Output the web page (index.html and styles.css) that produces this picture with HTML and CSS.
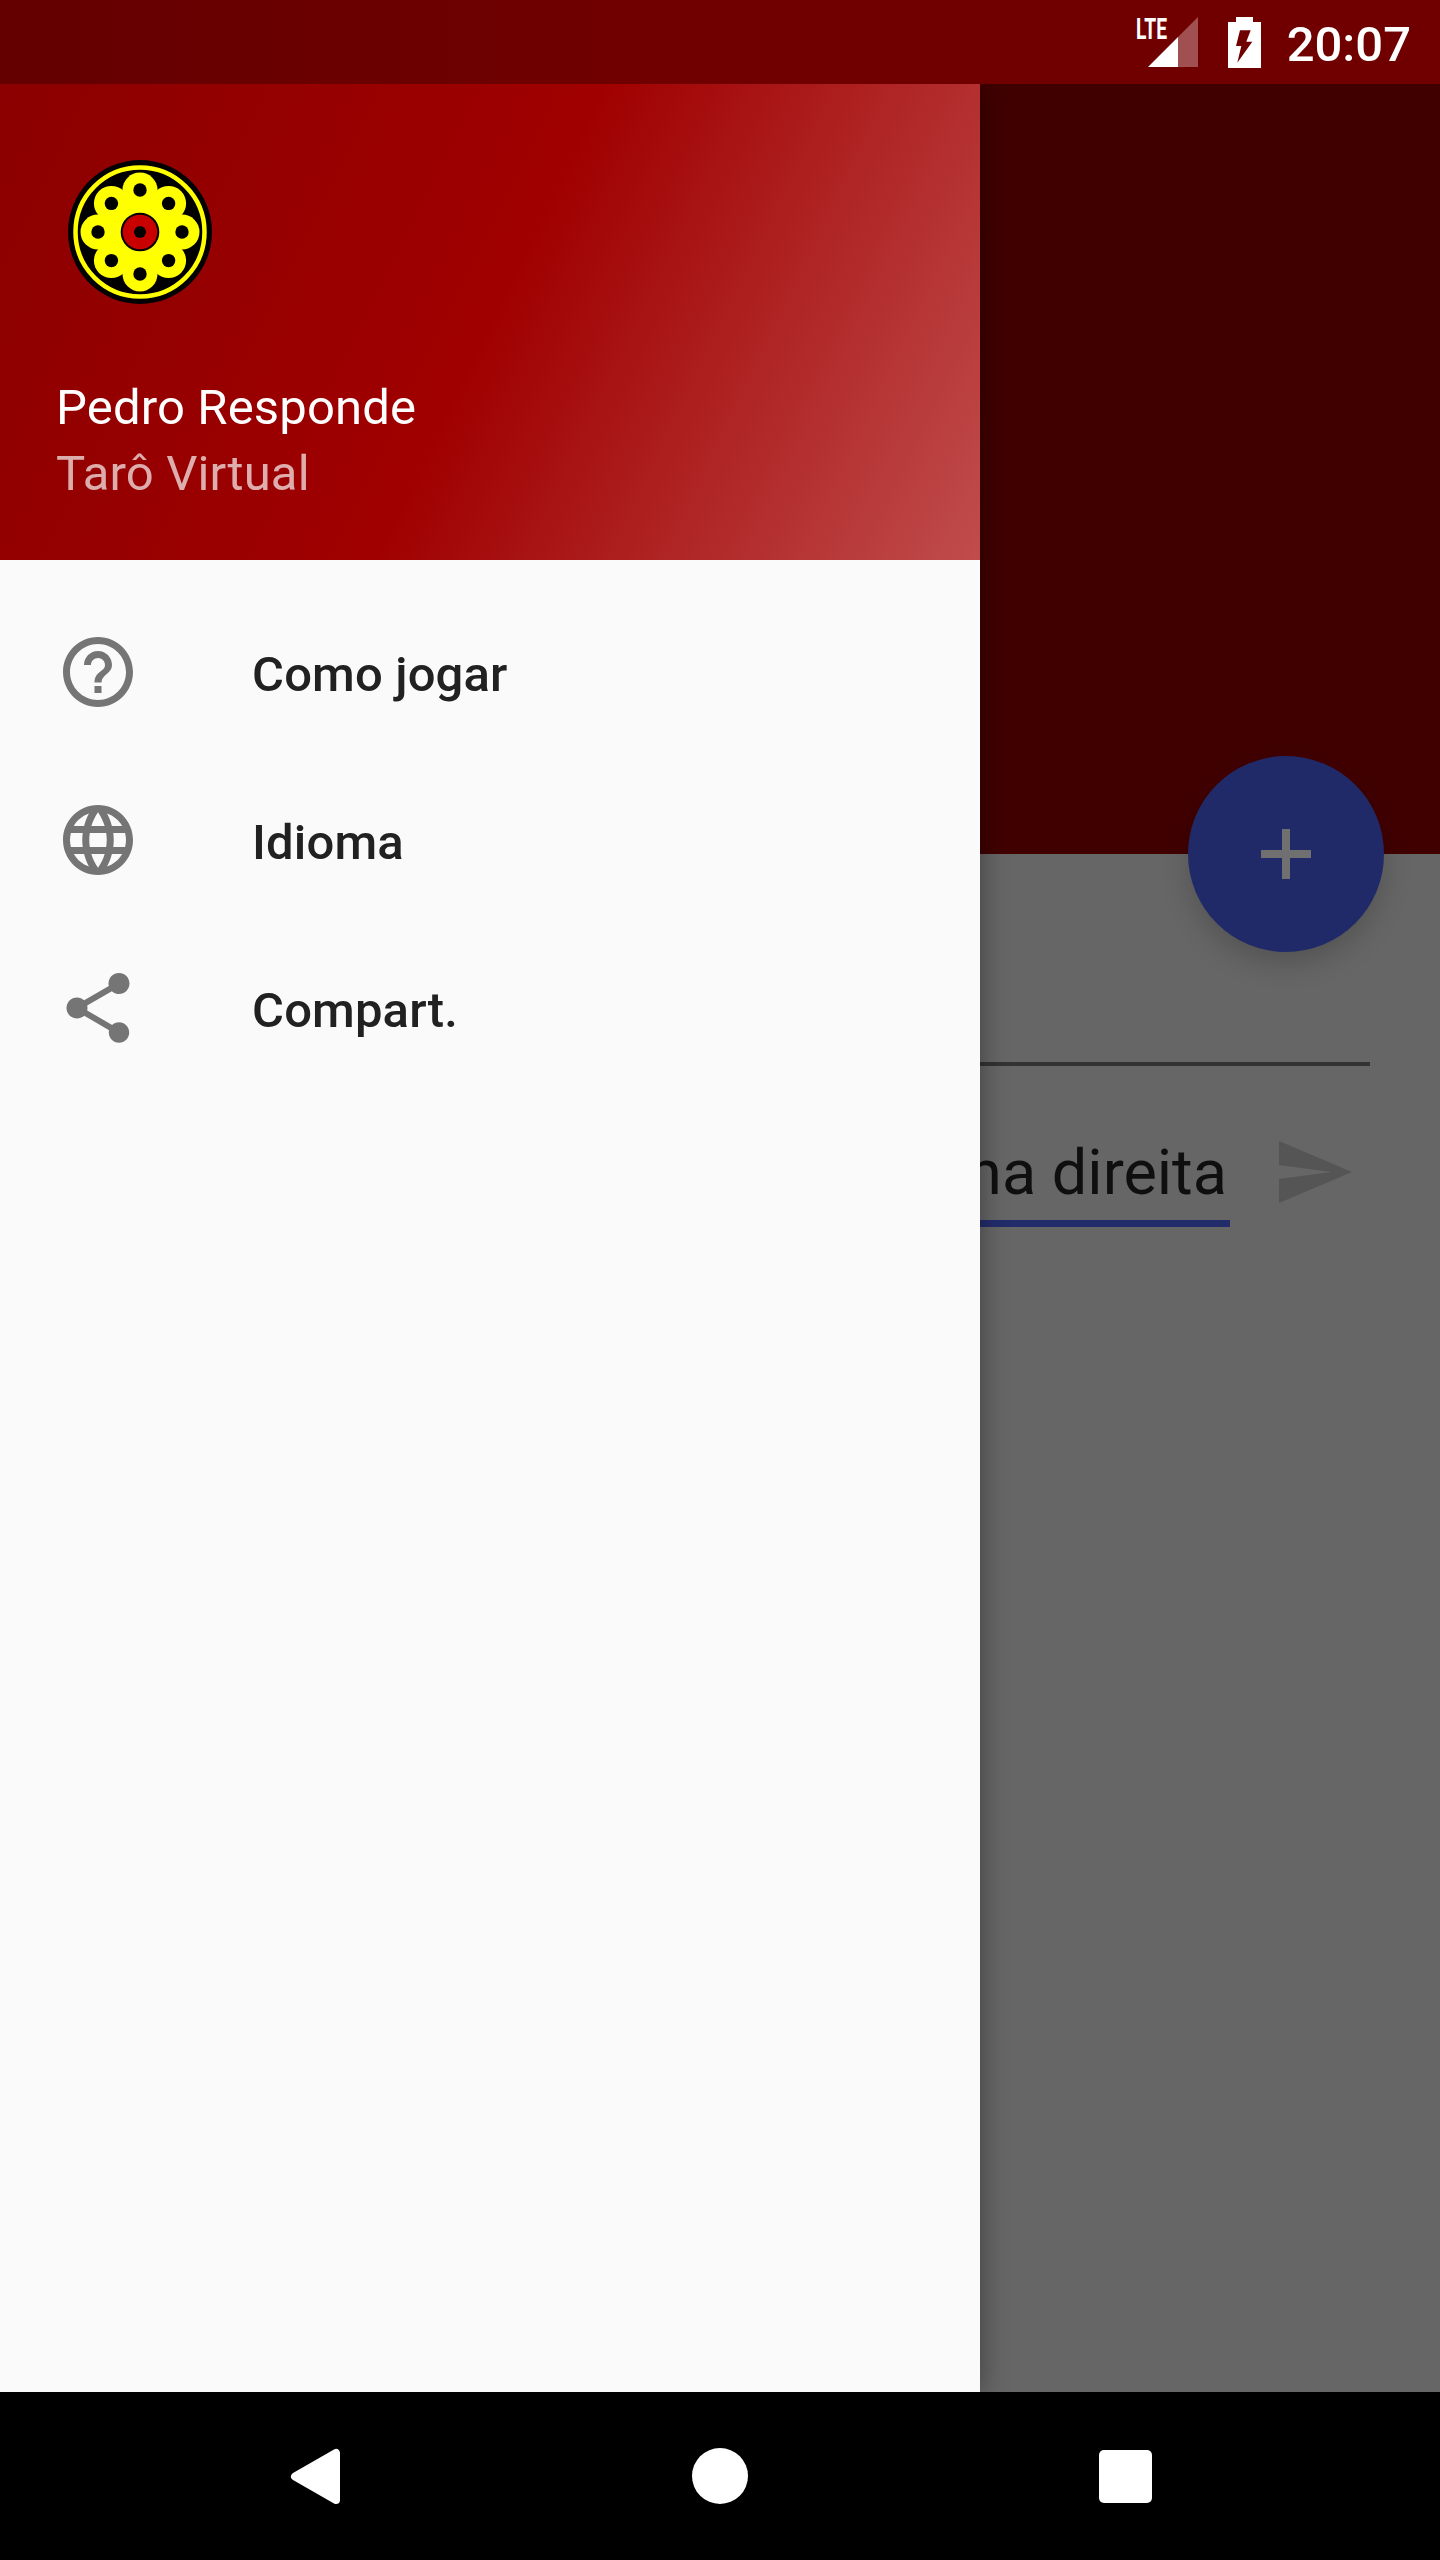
FILE: index.html
```html
<!DOCTYPE html>
<html lang="pt">
<head>
<meta charset="utf-8">
<title>Pedro Responde</title>
<link rel="stylesheet" href="styles.css">
</head>
<body>
<div class="phone">
  <header class="status">
    <svg class="sig" width="62" height="60" viewBox="0 -10 62 60">
      <text class="lte" x="0" y="22" textLength="31" lengthAdjust="spacingAndGlyphs">LTE</text>
      <polygon class="sig-dim" points="42,50 62,50 62,0 42,20"/>
      <polygon class="sig-on" points="12,50 42,50 42,20"/>
    </svg>
    <svg class="bat" width="33" height="51" viewBox="0 0 33 51">
      <path class="ico-white" fill-rule="evenodd" d="M8 0h17v5h8v46H0V5h8zM12 13.300H22.700L18.300 24.700H24.300L9.300 45.700L13.300 29H8z"/>
    </svg>
    <span class="time">20:07</span>
  </header>

  <main class="screen">
    <div class="appbar"></div>
    <div class="content">
      <div class="rule"></div>
      <div class="input-row">
        <div class="field"><span class="field-text">na direita</span></div>
        <svg class="send" width="73" height="62" viewBox="0 0 73 62">
          <polygon class="send-shape" points="0,0 73,31 0,62 0,38 53,31 0,24"/>
        </svg>
      </div>
    </div>

    <button class="fab" type="button">
      <svg width="50" height="50" viewBox="0 0 50 50"><path class="fab-plus" d="M21 0h8v21h21v8H29v21h-8V29H0v-8h21z"/></svg>
    </button>

    <aside class="drawer">
      <div class="drawer-head">
        <svg class="logo" width="144" height="144" viewBox="0 0 144 144">
          <circle class="k" cx="72" cy="72" r="72"/>
          <circle class="ring" cx="72" cy="72" r="64.500"/>
          <g class="y">
            <circle cx="72" cy="72" r="44"/>
            <circle cx="72" cy="30" r="17.500"/><circle cx="72" cy="114" r="17.500"/>
            <circle cx="30" cy="72" r="17.500"/><circle cx="114" cy="72" r="17.500"/>
            <circle cx="43.400" cy="43.400" r="17.500"/><circle cx="100.600" cy="43.400" r="17.500"/>
            <circle cx="43.400" cy="100.600" r="17.500"/><circle cx="100.600" cy="100.600" r="17.500"/>
          </g>
          <g class="k">
            <circle cx="72" cy="30" r="6.700"/><circle cx="72" cy="114" r="6.700"/>
            <circle cx="30" cy="72" r="6.700"/><circle cx="114" cy="72" r="6.700"/>
            <circle cx="43.400" cy="43.400" r="6.700"/><circle cx="100.600" cy="43.400" r="6.700"/>
            <circle cx="43.400" cy="100.600" r="6.700"/><circle cx="100.600" cy="100.600" r="6.700"/>
          </g>
          <circle class="hub" cx="72" cy="72" r="18.300"/>
          <circle class="k" cx="72" cy="72" r="6"/>
        </svg>
        <div class="head-name">Pedro Responde</div>
        <div class="head-sub">Tarô Virtual</div>
      </div>
      <nav class="menu">
        <a class="item">
          <svg class="item-ico" width="84" height="84" viewBox="0 0 24 24"><path d="M11 18h2v-2h-2v2zm1-16C6.480 2 2 6.480 2 12s4.480 10 10 10 10-4.480 10-10S17.520 2 12 2zm0 18c-4.410 0-8-3.590-8-8s3.590-8 8-8 8 3.590 8 8-3.590 8-8 8zm0-14c-2.210 0-4 1.790-4 4h2c0-1.100.9-2 2-2s2 .9 2 2c0 2-3 1.750-3 5h2c0-2.250 3-2.500 3-5 0-2.210-1.790-4-4-4z"/></svg>
          <span class="item-label">Como jogar</span>
        </a>
        <a class="item">
          <svg class="item-ico" width="84" height="84" viewBox="0 0 24 24"><path d="M11.990 2C6.470 2 2 6.480 2 12s4.470 10 9.990 10C17.520 22 22 17.520 22 12S17.520 2 11.990 2zm6.930 6h-2.950c-.32-1.250-.78-2.450-1.380-3.560 1.840.63 3.370 1.910 4.330 3.560zM12 4.040c.83 1.200 1.480 2.530 1.910 3.960h-3.820c.43-1.430 1.080-2.760 1.910-3.960zM4.260 14C4.100 13.360 4 12.690 4 12s.1-1.360.26-2h3.380c-.08.66-.14 1.320-.14 2 0 .68.06 1.340.14 2H4.260zm.82 2h2.950c.32 1.250.78 2.450 1.380 3.560-1.840-.63-3.370-1.900-4.330-3.560zm2.950-8H5.080c.96-1.660 2.490-2.930 4.330-3.560C8.810 5.550 8.350 6.750 8.030 8zM12 19.960c-.83-1.200-1.480-2.530-1.910-3.960h3.820c-.43 1.430-1.080 2.760-1.910 3.960zM14.340 14H9.660c-.09-.66-.16-1.320-.16-2 0-.68.07-1.350.16-2h4.680c.09.65.16 1.320.16 2 0 .68-.07 1.340-.16 2zm.25 5.560c.6-1.110 1.060-2.310 1.380-3.560h2.950c-.96 1.650-2.490 2.930-4.330 3.560zM16.360 14c.08-.66.14-1.320.14-2 0-.68-.06-1.340-.14-2h3.380c.16.64.26 1.310.26 2s-.1 1.360-.26 2h-3.380z"/></svg>
          <span class="item-label">Idioma</span>
        </a>
        <a class="item">
          <svg class="item-ico" width="84" height="84" viewBox="0 0 24 24"><path d="M18 16.080c-.76 0-1.440.3-1.960.77L8.910 12.700c.05-.23.09-.46.09-.7s-.04-.47-.09-.7l7.050-4.110c.54.5 1.250.81 2.040.81 1.660 0 3-1.340 3-3s-1.340-3-3-3-3 1.340-3 3c0 .24.04.47.09.7L8.040 9.810C7.500 9.310 6.790 9 6 9c-1.660 0-3 1.340-3 3s1.340 3 3 3c.79 0 1.500-.31 2.040-.81l7.120 4.160c-.05.21-.08.43-.08.65 0 1.610 1.310 2.920 2.920 2.920 1.610 0 2.920-1.310 2.920-2.920s-1.310-2.920-2.920-2.920z"/></svg>
          <span class="item-label">Compart.</span>
        </a>
      </nav>
    </aside>
  </main>

  <footer class="navbar">
    <div class="nav-btn"><svg width="60" height="60" viewBox="0 0 60 60"><polygon class="nav-back" points="10,30.500 51,7 51,54"/></svg></div>
    <div class="nav-btn"><div class="nav-home"></div></div>
    <div class="nav-btn"><div class="nav-recent"></div></div>
  </footer>
</div>
</body>
</html>
```

FILE: styles.css
```css
* { box-sizing: border-box; }
html, body { margin: 0; padding: 0; background: #000; }
body { font-family: Roboto, "Liberation Sans", sans-serif; }

.phone {
  width: 1440px;
  height: 2560px;
  display: flex;
  flex-direction: column;
  overflow: hidden;
}

/* Status bar */
.status {
  position: relative;
  z-index: 3;
  flex: 0 0 84px;
  display: flex;
  align-items: center;
  justify-content: flex-end;
  padding-right: 29px;
  background: linear-gradient(90deg, #640000 0, #700000 640px);
}
.sig { margin: 0 30px 10px 0; }
.lte { font-family: Roboto, sans-serif; font-weight: 700; font-size: 30px; fill: #fff; }
.sig-on { fill: #fff; }
.sig-dim { fill: #a05050; }
.ico-white { fill: #fff; }
.bat { margin-right: 26px; }
.time {
  color: #fff;
  font-size: 49px;
  font-weight: 500;
  line-height: 78px;
  padding-top: 6px;
}

/* Dimmed screen behind the drawer */
.screen {
  position: relative;
  flex: 1 1 auto;
  background: #666;
  overflow: hidden;
}
.appbar { height: 770px; background: #400000; }
.content { padding: 208px 70px 0 0; }
.rule { height: 4px; background: #333; }
.input-row {
  display: flex;
  align-items: center;
  justify-content: flex-end;
  gap: 49px;
  margin: 70px 18px 0 0;
}
.field {
  width: 430px;
  border-bottom: 7px solid #222c6b;
  text-align: right;
  padding: 0 3px 10px 0;
  font-size: 63px;
  line-height: 74px;
  color: #0f0f0f;
}
.send { margin-bottom: 19px; }
.send-shape { fill: #555; }

.fab {
  position: absolute;
  left: 1188px;
  top: 672px;
  width: 196px;
  height: 196px;
  border: 0;
  border-radius: 50%;
  padding: 0;
  display: flex;
  align-items: center;
  justify-content: center;
  background: #202a68;
  box-shadow: 0 12px 28px rgba(0, 0, 0, .18);
}
.fab-plus { fill: #707070; }

/* Drawer */
.drawer {
  position: absolute;
  left: 0;
  top: 0;
  bottom: 0;
  width: 980px;
  background: #fafafa;
  box-shadow: 0 0 26px rgba(0, 0, 0, .4);
}
.drawer-head {
  height: 476px;
  padding: 76px 56px 0;
  background: linear-gradient(115.9deg, #8b0000 0%, #a00000 50%, #c04c4c 100%);
}
.logo { display: block; margin-left: 12px; }
.head-name, .head-sub { font-size: 49px; line-height: 66px; letter-spacing: .15px; }
.head-name { color: #fff; margin-top: 71px; }
.head-sub { color: rgba(255, 255, 255, .68); }

.menu { padding-top: 28px; }
.item {
  height: 168px;
  display: flex;
  align-items: center;
  gap: 112px;
  padding-left: 56px;
  font-size: 49px;
  font-weight: 500;
  letter-spacing: .15px;
  color: #212121;
}
.item-ico { flex: none; fill: #757575; }
.item-label { margin-top: 4px; }

/* Navigation bar */
.navbar {
  position: relative;
  z-index: 3;
  flex: 0 0 168px;
  display: flex;
  justify-content: center;
  background: #000;
}
.nav-btn {
  width: 405px;
  display: flex;
  align-items: center;
  justify-content: center;
}
.nav-back { fill: #fff; stroke: #fff; stroke-width: 8; stroke-linejoin: round; }
.nav-home { width: 56px; height: 56px; margin: 0 1px 1px 0; border-radius: 50%; background: #fff; }
.nav-recent { width: 53px; height: 53px; border-radius: 5px; background: #fff; }

/* Logo */
.k { fill: #000; }
.y { fill: #ff0; }
.ring { fill: none; stroke: #ff0; stroke-width: 4.500; }
.hub { fill: #c80000; stroke: #000; stroke-width: 2; }
```
